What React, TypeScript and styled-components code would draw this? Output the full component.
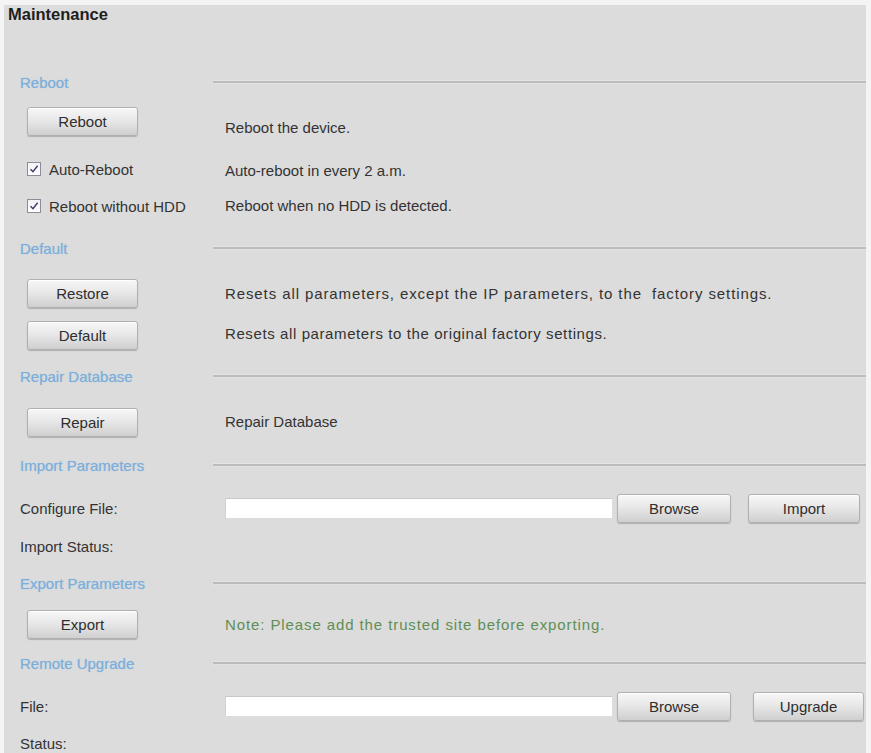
import React, { FC } from "react";
import styled, { createGlobalStyle } from "styled-components";

const GlobalStyle = createGlobalStyle`
  html, body {
    margin: 0;
    padding: 0;
    background: #f4f4f4;
  }
  body {
    font-family: "Liberation Sans", Arial, sans-serif;
    color: #333333;
  }
`;

const Panel = styled.div`
  margin: 5px 5px 0 4px;
  min-height: 748px;
  background: #dcdcdc;
  padding: 0 0 0 4px;
  box-sizing: border-box;
`;

const Title = styled.h1`
  margin: 0;
  height: 18px;
  line-height: 18px;
  font-size: 16.5px;
  font-weight: bold;
  color: #1e1e1e;
`;

const Row = styled.div<{ $top: number }>`
  display: flex;
  align-items: center;
  height: 30px;
  margin-top: ${({ $top }) => $top}px;
  padding-left: 12px;
`;

const HeaderLabel = styled.div`
  width: 193px;
  flex: none;
  font-size: 15px;
  color: #7aaedc;
  text-shadow: 0 0 1px rgba(122, 174, 220, 0.5);
`;

const HeaderLine = styled.div`
  flex: 1;
  height: 2px;
  background: #bcbcbc;
  box-shadow: 0 -1px 0 #e4e4e4, 0 1px 0 #e2e2e2;
`;

const LeftCell = styled.div<{ $inset?: number }>`
  width: 205px;
  flex: none;
  padding-left: ${({ $inset }) => $inset ?? 0}px;
  box-sizing: border-box;
  display: flex;
  align-items: center;
`;

const Label = styled.span`
  font-size: 15px;
  color: #333333;
`;

const Desc = styled.span<{ $drop?: number; $note?: boolean; $spread?: number }>`
  font-size: 15px;
  color: ${({ $note }) => ($note ? "#5f8f55" : "#333333")};
  position: relative;
  top: ${({ $drop }) => $drop ?? 0}px;
  letter-spacing: ${({ $spread }) => $spread ?? 0}px;
  white-space: pre;
`;

const Button = styled.button<{ $w?: number; $left?: number }>`
  width: ${({ $w }) => $w ?? 111}px;
  height: 29px;
  margin-left: ${({ $left }) => $left ?? 0}px;
  flex: none;
  padding: 0;
  font-family: "Liberation Sans", Arial, sans-serif;
  font-size: 15px;
  color: #2e2e2e;
  background: linear-gradient(#f7f7f7, #e8e8e8 45%, #cfcfcf);
  border: 1px solid #b0b0b0;
  border-radius: 3px;
  box-shadow: 0 1px 1px rgba(0, 0, 0, 0.2), inset 0 1px 0 #ffffff;
  cursor: pointer;
`;

const Check = styled.span`
  width: 12px;
  height: 12px;
  flex: none;
  border: 1px solid #8d8d99;
  background: linear-gradient(#f2f2f2, #ffffff);
  display: flex;
  align-items: center;
  justify-content: center;
  margin: 0 8px 0 0;
`;

const FileInput = styled.input`
  width: 387px;
  height: 20px;
  box-sizing: border-box;
  border: none;
  border-top: 1px solid #c8c8c8;
  border-left: 1px solid #d2d2d2;
  background: #ffffff;
  margin-right: 5px;
  flex: none;
`;

const CheckBox: FC = () => (
  <Check>
    <svg width="10" height="10" viewBox="0 0 10 10">
      <path d="M1.5 5.2 L4 7.8 L8.6 1.8" fill="none" stroke="#3a3a6e" strokeWidth="1.4" />
    </svg>
  </Check>
);

const SectionHeader: FC<{ title: string; top: number }> = ({ title, top }) => (
  <Row $top={top}>
    <HeaderLabel>{title}</HeaderLabel>
    <HeaderLine />
  </Row>
);

type ActionRowProps = {
  top: number;
  button: string;
  text: string;
  drop?: number;
  note?: boolean;
  spread?: number;
};

const ActionRow: FC<ActionRowProps> = ({ top, button, text, drop, note, spread }) => (
  <Row $top={top}>
    <LeftCell $inset={7}>
      <Button>{button}</Button>
    </LeftCell>
    <Desc $drop={drop} $note={note} $spread={spread}>
      {text}
    </Desc>
  </Row>
);

const CheckRow: FC<{ top: number; label: string; text: string; drop?: number }> = ({ top, label, text, drop }) => (
  <Row $top={top}>
    <LeftCell $inset={7}>
      <CheckBox />
      <Label>{label}</Label>
    </LeftCell>
    <Desc $drop={drop}>{text}</Desc>
  </Row>
);

const FileRow: FC<{ top: number; label: string; action: string; gap: number; w: number }> = ({
  top,
  label,
  action,
  gap,
  w,
}) => (
  <Row $top={top}>
    <LeftCell>
      <Label>{label}</Label>
    </LeftCell>
    <FileInput type="text" />
    <Button $w={114}>Browse</Button>
    <Button $w={w} $left={gap}>
      {action}
    </Button>
  </Row>
);

const TextRow: FC<{ top: number; label: string }> = ({ top, label }) => (
  <Row $top={top}>
    <Label>{label}</Label>
  </Row>
);

const App: FC = () => {
  return (
    <>
      <GlobalStyle />
      <Panel>
        <Title>Maintenance</Title>
        <SectionHeader title="Reboot" top={44} />
        <ActionRow top={9} button="Reboot" text="Reboot the device." drop={6} />
        <CheckRow top={18} label="Auto-Reboot" text="Auto-reboot in every 2 a.m." drop={1} />
        <CheckRow top={7} label="Reboot without HDD" text="Reboot when no HDD is detected." drop={-1} />
        <SectionHeader title="Default" top={12} />
        <ActionRow
          top={15}
          button="Restore"
          text="Resets all parameters, except the IP parameters, to the  factory settings."
          spread={0.9}
        />
        <ActionRow
          top={12}
          button="Default"
          text="Resets all parameters to the original factory settings."
          drop={-2}
          spread={0.6}
        />
        <SectionHeader title="Repair Database" top={11} />
        <ActionRow top={16} button="Repair" text="Repair Database" drop={-1} />
        <SectionHeader title="Import Parameters" top={13} />
        <FileRow top={13} label="Configure File:" action="Import" gap={17} w={112} />
        <TextRow top={8} label="Import Status:" />
        <SectionHeader title="Export Parameters" top={7} />
        <ActionRow
          top={11}
          button="Export"
          text="Note: Please add the trusted site before exporting."
          note
          spread={0.9}
        />
        <SectionHeader title="Remote Upgrade" top={9} />
        <FileRow top={13} label="File:" action="Upgrade" gap={22} w={111} />
        <TextRow top={7} label="Status:" />
      </Panel>
    </>
  );
};

export default App;
